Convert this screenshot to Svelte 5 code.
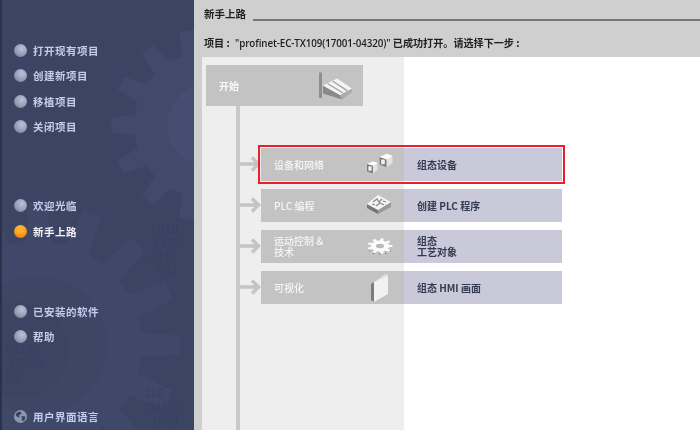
<script>
  const topNav = ["打开现有项目", "创建新项目", "移植项目", "关闭项目"];
  const midNav = [
    { label: "欢迎光临", active: false },
    { label: "新手上路", active: true },
  ];
  const helpNav = ["已安装的软件", "帮助"];

  const steps = [
    { id: "devices", left: ["设备和网络"], right: ["组态设备"], selected: true },
    { id: "plc", left: ["PLC 编程"], right: ["创建 PLC 程序"] },
    { id: "motion", left: ["运动控制 &", "技术"], right: ["组态", "工艺对象"] },
    { id: "hmi", left: ["可视化"], right: ["组态 HMI 画面"] },
  ];

  // gear outline for the sidebar watermark and the motion icon
  function gear(cx, cy, outer, inner, teeth) {
    const pts = [];
    const step = (Math.PI * 2) / teeth;
    for (let i = 0; i < teeth; i++) {
      const a = i * step;
      const corners = [
        [a - step * 0.3, inner],
        [a - step * 0.17, outer],
        [a + step * 0.17, outer],
        [a + step * 0.3, inner],
      ];
      for (const [t, r] of corners) {
        pts.push(`${(cx + Math.cos(t) * r).toFixed(1)},${(cy + Math.sin(t) * r).toFixed(1)}`);
      }
    }
    return pts.join(" ");
  }
</script>

{#snippet bullet(active)}
  <span class="bullet" class:active></span>
{/snippet}

<div class="app">
  <aside class="sidebar">
    <svg class="watermark" width="192" height="430" viewBox="2 0 192 430">
      <polygon points={gear(208, 125, 97, 74, 14)} fill="#414a6b" />
      <circle cx="208" cy="125" r="41" fill="#454e70" />
      <polygon points={gear(38, 345, 142, 104, 16)} fill="#3f4868" />
      <circle cx="38" cy="345" r="69" fill="#3d4665" />
      <circle cx="20" cy="350" r="48" fill="#3b4463" />
    </svg>
    <div class="digits one">01100<br />&nbsp;10011<br />01</div>
    <div class="digits two">110<br />&nbsp;01100<br />&nbsp;&nbsp;1001</div>
    <div class="digits three">1010<br />&nbsp;1100<br />0110<br />&nbsp;&nbsp;011</div>

    <nav class="group first">
      {#each topNav as item}
        <div class="nav-item">{@render bullet(false)}{item}</div>
      {/each}
    </nav>
    <nav class="group second">
      {#each midNav as item}
        <div class="nav-item" class:current={item.active}>{@render bullet(item.active)}{item.label}</div>
      {/each}
    </nav>
    <nav class="group third">
      {#each helpNav as item}
        <div class="nav-item">{@render bullet(false)}{item}</div>
      {/each}
    </nav>
    <div class="nav-item language">
      <svg class="globe" width="13" height="13" viewBox="0 0 13 13">
        <circle cx="6.5" cy="6.5" r="6.5" fill="#8b97b0" />
        <path d="M3 2.5 L6.5 1.5 L7.5 4 L5 5 L5.5 7.5 L3.5 7 L1.5 5 Z" fill="#34405f" />
        <path d="M7.5 6 L11.5 6.5 L10.5 10.5 L8 11 Z" fill="#3a4766" />
      </svg>
      用户界面语言
    </div>
  </aside>

  <main class="content">
    <header class="title-row">
      <h1>新手上路</h1>
      <span class="rule"></span>
    </header>
    <p class="status">项目 : <span class="latin">"profinet-EC-TX109(17001-04320)"</span> 已成功打开。请选择下一步 :</p>

    <section class="panel">
      <div class="start">
        <span>开始</span>
        <svg width="36" height="28" viewBox="0 0 36 28">
          <rect x="1" y="0.5" width="3" height="25.5" fill="#8f8f8f" />
          <path d="M5 13.5 L22 23 L24 27.5 L5 21.5 Z" fill="#8a8a8a" />
          <path d="M22 23 L34 16.5 L34 20 L24 27.5 Z" fill="#ababab" />
          <path d="M5 13.5 L19 6.5 L34 16.5 L22 23 Z" fill="#f4f4f4" />
          <path d="M9.5 11.5 L25 21 M14.5 9 L29.5 18.8" stroke="#a2a2a2" stroke-width="1.4" fill="none" />
        </svg>
      </div>

      <div class="tree">
        {#each steps as step}
          <div class="step">
            <svg class="arrow" width="21" height="16" viewBox="0 0 21 16">
              <path d="M0 8 H18 M12 1.5 L18.5 8 L12 14.5" fill="none" stroke="#c4c4c4" stroke-width="3.5" />
            </svg>
            <div class="card" class:selected={step.selected}>
              <div class="card-left">
                <div class="lines">
                  {#each step.left as line}{line}<br />{/each}
                </div>
                <svg class="step-icon" width="30" height="24" viewBox="0 0 30 24">
                  {#if step.id === "devices"}
                    <path d="M1 12 L7 9.5 L11.5 11 L11.5 18 L7 21.5 L1 19.5 Z" fill="#e2e2e2" />
                    <path d="M1 12 L7 9.5 L11.5 11 L7 13.8 Z" fill="#fff" />
                    <path d="M1 12 L7 13.8 L7 21.5 L1 19.5 Z" fill="#7d7d7d" />
                    <rect x="2.4" y="14.3" width="3.2" height="4.4" fill="#f2f2f2" />
                    <path d="M13.5 5 L21 1.8 L26.5 4 L26.5 11 L20.5 15.2 L13.5 12.5 Z" fill="#e2e2e2" />
                    <path d="M13.5 5 L21 1.8 L26.5 4 L20.5 7.6 Z" fill="#fff" />
                    <path d="M13.5 5 L20.5 7.6 L20.5 15.2 L13.5 12.5 Z" fill="#7d7d7d" />
                    <rect x="15.2" y="7.6" width="3.6" height="4.6" fill="#f2f2f2" />
                  {:else if step.id === "plc"}
                    <path d="M1 11 L12 17 L12 21 L1 15 Z" fill="#757575" />
                    <path d="M12 17 L25 9 L25 14 L12 21 Z" fill="#9a9a9a" />
                    <path d="M1 11 L12 2 L25 9 L12 17 Z" fill="#f4f4f4" />
                    <path d="M7 9 L11 6 L13 9 L16 6 M10 13 L14 10 L18 12 M6 11 L9 12 M17 8 L20 9" stroke="#8c8c8c" stroke-width="1.3" fill="none" />
                  {:else if step.id === "motion"}
                    <polygon points={gear(14, 12, 12.5, 9, 9)} fill="#fbfbfb" transform="matrix(1 0 0 .62 0 4.6)" />
                    <ellipse cx="14" cy="12" rx="4" ry="2.2" fill="#b8b8b8" />
                    <path d="M3 17 h1 M7 19.5 h1.5 M13 20 h1.5 M19 19.5 h1.5 M24 17 h1" stroke="#6f6f6f" stroke-width="1.2" />
                  {:else}
                    <path d="M5 9 L8 7 L8 27 L5 25 Z" fill="#7b7b7b" />
                    <path d="M8 7 L22 0 L22 19 L8 27 Z" fill="#f1f1f1" />
                    <path d="M5 9 L19 -1 L22 0 L8 7 Z" fill="#dedede" />
                  {/if}
                </svg>
              </div>
              <div class="card-right">
                <div class="lines">
                  {#each step.right as line}{line}<br />{/each}
                </div>
              </div>
            </div>
          </div>
        {/each}
      </div>
    </section>
  </main>
</div>

<style>
  :global(body) {
    margin: 0;
    background: #cfcfcf;
  }
  .app {
    display: flex;
    width: 700px;
    height: 430px;
    overflow: hidden;
    font-family: "Noto Sans CJK SC", "Liberation Sans", sans-serif;
    filter: blur(0.35px);
  }

  .sidebar {
    position: relative;
    box-sizing: border-box;
    flex: 0 0 194px;
    height: 430px;
    padding: 38px 0 0 12px;
    overflow: hidden;
    background: #3b4463;
    border-left: 2px solid #2b3149;
  }
  .watermark {
    position: absolute;
    top: 0;
    left: 0;
  }
  .digits {
    position: absolute;
    color: #384160;
    font-family: "Liberation Sans", sans-serif;
    font-size: 12px;
    line-height: 14px;
    letter-spacing: 0.5px;
  }
  .digits.one { left: 4px; top: 342px; }
  .digits.two { left: 142px; top: 386px; }
  .digits.three { left: 148px; top: 222px; }
  .group {
    position: relative;
    display: flex;
    flex-direction: column;
  }
  .second { margin-top: 54px; }
  .third { margin-top: 55px; }
  .nav-item {
    position: relative;
    display: flex;
    align-items: center;
    gap: 6px;
    height: 25.3px;
    color: #c4cceb;
    font-size: 10.5px;
    font-weight: 700;
    letter-spacing: 0.5px;
    white-space: nowrap;
  }
  .nav-item.current {
    color: #f4f4f6;
  }
  .language {
    margin-top: 54px;
  }
  .bullet {
    flex: 0 0 13px;
    height: 13px;
    border-radius: 50%;
    background: radial-gradient(circle at 60% 35%, #b9c2d6 0%, #9aa5bd 45%, #6c7690 100%);
  }
  .bullet.active {
    background: radial-gradient(circle at 50% 30%, #ffc04a 0%, #ff9a12 55%, #e07000 100%);
  }
  .globe {
    flex: 0 0 13px;
  }

  .content {
    display: flex;
    flex-direction: column;
    flex: 1;
    min-width: 0;
    padding-left: 8px;
    background: #cfcfcf;
  }
  .title-row {
    display: flex;
    align-items: flex-end;
    gap: 7px;
    height: 21px;
    padding-left: 2px;
  }
  h1 {
    margin: 0 0 -1px;
    color: #1f1f1f;
    font-size: 10.5px;
    font-weight: 700;
    line-height: 16px;
  }
  .rule {
    flex: 1;
    height: 2px;
    background: #777;
  }
  .status {
    height: 16px;
    margin: 14px 0 6px;
    padding-left: 2px;
    color: #1f1f1f;
    font-size: 10.1px;
    font-weight: 700;
    line-height: 16px;
    white-space: nowrap;
  }
  .latin {
    margin-left: 3px;
    font-family: "Open Sans", "Liberation Sans", sans-serif;
    font-weight: 600;
    font-size: 9.8px;
    letter-spacing: -0.1px;
  }

  .panel {
    flex: 1;
    padding: 8px 0 0 4px;
    background: linear-gradient(to right, #eeeeee 202px, #ffffff 202px);
  }
  .start {
    display: flex;
    align-items: center;
    justify-content: space-between;
    box-sizing: border-box;
    width: 157px;
    height: 41px;
    padding: 0 9px 0 13px;
    color: #fafafa;
    background: #c3c3c3;
    font-size: 10px;
    font-weight: 700;
  }
  .tree {
    display: flex;
    flex-direction: column;
    gap: 8.5px;
    height: 324px;
    margin-left: 30px;
    padding-top: 42px;
    box-sizing: border-box;
    border-left: 4px solid #c9c9c9;
  }
  .step {
    display: flex;
    align-items: center;
    height: 32.5px;
  }
  .arrow {
    flex: 0 0 21px;
  }
  .card {
    display: flex;
    flex: 0 0 301px;
    height: 100%;
    font-size: 10px;
  }
  .card.selected {
    outline: 2px solid #e8202c;
    outline-offset: 1px;
  }
  .card-left {
    display: flex;
    align-items: center;
    justify-content: space-between;
    box-sizing: border-box;
    flex: 0 0 143px;
    padding: 0 8px 0 13px;
    color: #f6f6f6;
    font-weight: 500;
    background: #c3c3c3;
  }
  .lines {
    line-height: 11px;
  }
  .step-icon {
    flex: 0 0 30px;
    overflow: visible;
  }
  .card-right {
    display: flex;
    align-items: center;
    flex: 1;
    padding-left: 13px;
    color: #343a52;
    font-weight: 700;
    background: #c9c9d9;
  }
</style>
